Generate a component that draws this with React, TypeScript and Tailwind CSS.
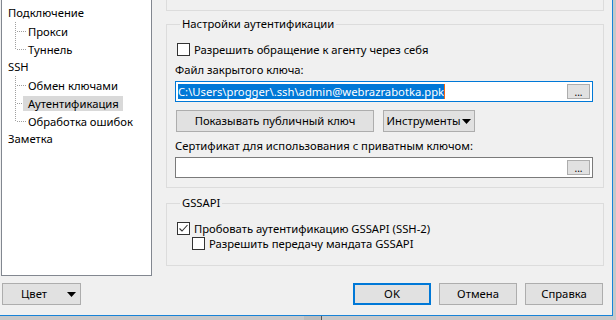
import type { ReactNode } from 'react';

const FONT = "font-['Noto_Sans','DejaVu_Sans',sans-serif]";

function Branch({ last }: { last?: boolean }) {
  return (
    <svg width="11" height="18" className="shrink-0">
      <line x1="0.5" y1="0" x2="0.5" y2={last ? 10 : 18} stroke="#a0a0a0" strokeDasharray="1 1" />
      <line x1="2" y1="9.5" x2="11" y2="9.5" stroke="#a0a0a0" strokeDasharray="1 1" />
    </svg>
  );
}

function TreeTop({ label }: { label: string }) {
  return <div className="h-[18px] pl-[6px] leading-[18px]">{label}</div>;
}

function TreeChild({ label, last, selected }: { label: string; last?: boolean; selected?: boolean }) {
  return (
    <div className="flex h-[18px] items-center pl-[13px]">
      <Branch last={last} />
      <span
        className={
          '-ml-[3px] h-[15px] pl-[5px] pr-[4px] leading-[15px] ' + (selected ? 'bg-[#d9d9d9]' : '')
        }
      >
        {label}
      </span>
    </div>
  );
}

function Checkbox({ checked }: { checked?: boolean }) {
  return (
    <span className="flex h-[13px] w-[13px] shrink-0 items-center justify-center border border-[#333333] bg-white">
      {checked && (
        <svg width="11" height="11" viewBox="0 0 11 11">
          <polyline points="1.5,5.5 4,8 9.5,2" fill="none" stroke="#333333" strokeWidth="1.1" />
        </svg>
      )}
    </span>
  );
}

function CheckRow({ label, checked, className }: { label: string; checked?: boolean; className?: string }) {
  return (
    <div className={'flex h-[15px] items-center gap-[4px] leading-[15px] ' + (className ?? '')}>
      <Checkbox checked={checked} />
      <span>{label}</span>
    </div>
  );
}

function Group({ title, className, children }: { title: string; className: string; children: ReactNode }) {
  return (
    <div className={'border border-[#dcdcdc] ' + className}>
      <div className="-mt-[9px] ml-[5px] h-[16px] w-fit bg-[#f0f0f0] px-[2px] leading-[16px]">{title}</div>
      {children}
    </div>
  );
}

function DotsButton() {
  return (
    <span className="flex h-[15px] w-[23px] items-end justify-center border border-[#adadad] bg-[#e1e1e1] pb-[1px] text-[10px] leading-[10px]">
      ...
    </span>
  );
}

function Button({ children, className }: { children: ReactNode; className?: string }) {
  return (
    <div
      className={
        'flex h-[22px] items-center justify-center border border-[#adadad] bg-[#e1e1e1] leading-[16px] ' +
        (className ?? '')
      }
    >
      {children}
    </div>
  );
}

function Arrow() {
  return (
    <svg width="9" height="5" viewBox="0 0 9 5" className="shrink-0">
      <polygon points="0,0 9,0 4.5,5" fill="#000000" />
    </svg>
  );
}

export default function App() {
  return (
    <div className={'flex h-[320px] w-[616px] flex-col overflow-hidden bg-[#c8c8c8] text-[11.25px] text-black ' + FONT}>
      <div className="flex">
        <div className="flex h-[316px] w-[613px] flex-col border-b border-r border-[#1883d7] bg-[#f0f0f0]">
          <div className="flex h-[276px]">
            {/* tree */}
            <div className="ml-[1px] h-[276px] w-[151px] border-b border-l border-r border-[#828790] bg-white pt-[4px]">
              <TreeTop label="Подключение" />
              <TreeChild label="Прокси" />
              <TreeChild label="Туннель" last />
              <TreeTop label="SSH" />
              <TreeChild label="Обмен ключами" />
              <TreeChild label="Аутентификация" selected />
              <TreeChild label="Обработка ошибок" last />
              <TreeTop label="Заметка" />
            </div>

            {/* settings */}
            <div className="ml-[14px] flex w-[438px] flex-col">
              <div className="h-[11px] border-b border-l border-r border-[#dcdcdc]" />

              <Group title="Настройки аутентификации" className="mt-[13px] h-[164px] pl-[8px] pr-[10px]">
                <CheckRow label="Разрешить обращение к агенту через себя" className="ml-[2px] mt-[10px]" />
                <div className="mt-[5px] h-[16px] leading-[16px]">Файл закрытого ключа:</div>
                <div className="mt-[3px] flex h-[21px] items-center border border-[#0078d7] bg-white pl-[2px] pr-[2px]">
                  <span className="h-[15px] bg-[#0078d7] leading-[15px] text-white">
                    C:\Users\progger\.ssh\admin@webrazrabotka.ppk
                  </span>
                  <span className="h-[15px] w-[1px] bg-[#f7630c]" />
                  <span className="ml-auto">
                    <DotsButton />
                  </span>
                </div>
                <div className="mt-[8px] flex gap-[9px] pl-[1px]">
                  <Button className="w-[198px]">Показывать публичный ключ</Button>
                  <Button className="w-[92px] gap-[2px]">
                    <span>Инструменты</span>
                    <Arrow />
                  </Button>
                </div>
                <div className="mt-[6px] h-[16px] leading-[16px]">Сертификат для использования с приватным ключом:</div>
                <div className="mt-[3px] flex h-[21px] items-center border border-[#7a7a7a] bg-white pr-[2px]">
                  <span className="ml-auto">
                    <DotsButton />
                  </span>
                </div>
              </Group>

              <Group title="GSSAPI" className="mt-[15px] h-[63px] pl-[8px] pr-[10px]">
                <CheckRow label="Пробовать аутентификацию GSSAPI (SSH-2)" checked className="ml-[2px] mt-[10px]" />
                <CheckRow label="Разрешить передачу мандата GSSAPI" className="ml-[17px]" />
              </Group>
            </div>
          </div>

          {/* bottom buttons */}
          <div className="flex pt-[7px] pr-[9px]">
            <Button className="ml-[2px] w-[79px] !justify-start">
              <span className="ml-[18px]">Цвет</span>
              <span className="ml-auto mr-[4px] flex">
                <Arrow />
              </span>
            </Button>
            <div className="ml-auto flex gap-[8px]">
              <Button className="w-[78px] border-2 !border-[#0078d7]">OK</Button>
              <Button className="w-[78px]">Отмена</Button>
              <Button className="w-[78px]">Справка</Button>
            </div>
          </div>
        </div>
      </div>
      <div className="flex h-[4px]">
        <div className="w-[304px]" />
        <div className="w-[17px] bg-[#bcbcbc]" />
        <div className="w-[1px] bg-[#555555]" />
      </div>
    </div>
  );
}
